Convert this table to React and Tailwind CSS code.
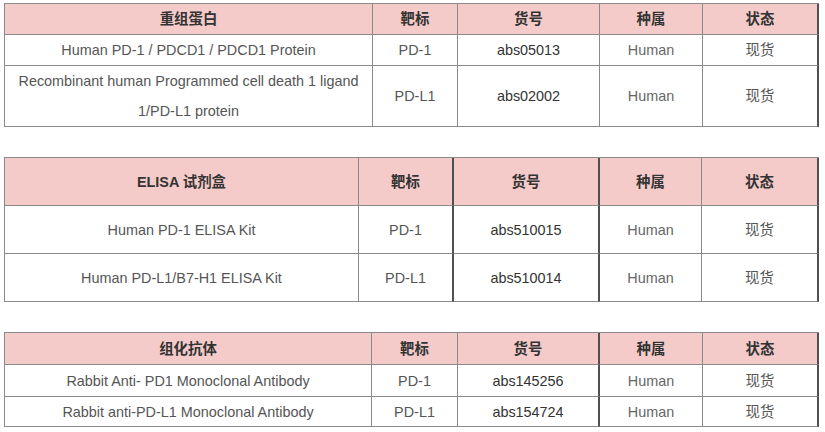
import React from "react";

const base =
  "flex items-center justify-center text-center border-b border-b-[#8a8a8a]";
const normR = "border-r border-r-[#8a8a8a]";
const darkR = "border-r-2 border-r-[#505050]";

function Row({ cells, h, head, dark, grid }) {
  return (
    <div className={`grid ${grid}`}>
      {cells.map((c, i) => {
        const right = i === 4 || dark.includes(i) ? darkR : normR;
        const color = head
          ? "bg-[#f5cbc9] font-bold text-[#333]"
          : i === 2
          ? "text-[#333]"
          : i === 3
          ? "text-[#666]"
          : "text-[#555]";
        return (
          <div key={i} className={`${base} ${right} ${color} ${h} ${i === 0 ? "px-2" : ""}`}>
            {c}
          </div>
        );
      })}
    </div>
  );
}

function Table({ title, grid, headH, rows, dark = [] }) {
  return (
    <div className="w-[815px] border-t border-l border-[#8a8a8a] text-[14.4px] leading-[30px]">
      <Row cells={[title, "靶标", "货号", "种属", "状态"]} h={headH} head dark={dark} grid={grid} />
      {rows.map((r, i) => (
        <Row key={i} cells={r.cells} h={r.h} dark={dark} grid={grid} />
      ))}
    </div>
  );
}

export default function App() {
  return (
    <div className="bg-white w-[825px] h-[432px] pt-[3px] pl-[4px] flex flex-col gap-[30px] font-['Liberation_Sans','Noto_Sans_CJK_SC',sans-serif]">
      <Table
        title="重组蛋白"
        grid="grid-cols-[368px_85px_142px_103px_116px]"
        headH="h-[31px]"
        rows={[
          { h: "h-[31px]", cells: ["Human PD-1 / PDCD1 / PDCD1 Protein", "PD-1", "abs05013", "Human", "现货"] },
          {
            h: "h-[61px]",
            cells: [
              <span key="a">Recombinant human Programmed cell death 1 ligand<br />1/PD-L1 protein</span>,
              "PD-L1",
              "abs02002",
              "Human",
              "现货",
            ],
          },
        ]}
      />
      <Table
        title="ELISA 试剂盒"
        grid="grid-cols-[354px_95px_146px_102px_117px]"
        headH="h-[48px]"
        dark={[1, 2]}
        rows={[
          { h: "h-[48px]", cells: ["Human PD-1 ELISA Kit", "PD-1", "abs510015", "Human", "现货"] },
          { h: "h-[48px]", cells: ["Human PD-L1/B7-H1 ELISA Kit", "PD-L1", "abs510014", "Human", "现货"] },
        ]}
      />
      <Table
        title="组化抗体"
        grid="grid-cols-[367px_86px_142px_103px_116px]"
        headH="h-[32px]"
        dark={[2]}
        rows={[
          { h: "h-[32px]", cells: ["Rabbit Anti- PD1 Monoclonal Antibody", "PD-1", "abs145256", "Human", "现货"] },
          { h: "h-[30px]", cells: ["Rabbit anti-PD-L1 Monoclonal Antibody", "PD-L1", "abs154724", "Human", "现货"] },
        ]}
      />
    </div>
  );
}
